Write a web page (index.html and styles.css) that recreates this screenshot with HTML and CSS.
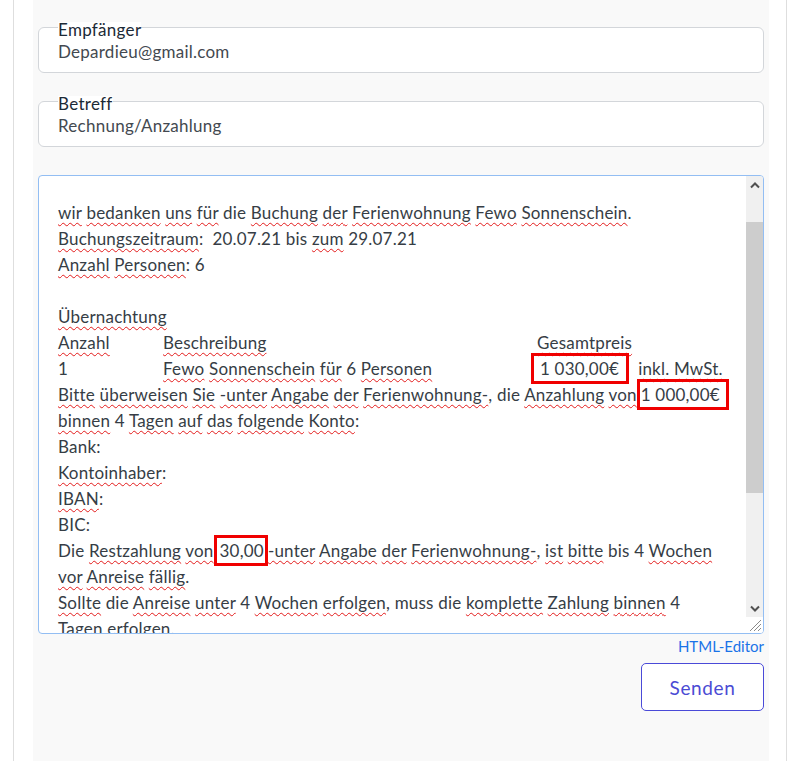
FILE: index.html
```html
<!DOCTYPE html>
<html lang="de">
<head>
    <meta charset="UTF-8">
    <meta name="viewport" content="width=device-width, initial-scale=1.0">
    <title>Rechnung senden</title>
    <link rel="stylesheet" href="styles.css">
</head>
<body>

    <div class="frame">
        <div class="panel">

            <div class="field">
                <span class="field-label">Empfänger</span>
                <div class="field-value">Depardieu@gmail.com</div>
            </div>

            <div class="field">
                <span class="field-label">Betreff</span>
                <div class="field-value">Rechnung/Anzahlung</div>
            </div>

            <div class="editor">
                <div class="editor-text">
                    <div class="line"><u>wir</u> <u>bedanken</u> <u>uns</u> <u>für</u> die <u>Buchung</u> <u>der</u> <u>Ferienwohnung</u> <u>Fewo</u> <u>Sonnenschein</u>.</div>
                    <div class="line"><u>Buchungszeitraum</u>:&nbsp; 20.07.21 bis <u>zum</u> 29.07.21</div>
                    <div class="line"><u>Anzahl</u> <u>Personen</u>: 6</div>
                    <div class="line">&nbsp;</div>
                    <div class="line"><u>Übernachtung</u></div>
                    <div class="line"><span class="col-a"><u>Anzahl</u></span><span class="col-b"><u>Beschreibung</u></span><u>Gesamtpreis</u></div>
                    <div class="line"><span class="col-a">1</span><span class="col-b col-b-short"><u>Fewo</u> <u>Sonnenschein</u> <u>für</u> 6 <u>Personen</u></span><span class="mark mark-total">1 030,00€</span>&nbsp; <u>inkl.</u> <u>MwSt.</u></div>
                    <div class="line"><u>Bitte</u> <u>überweisen</u> <u>Sie</u> <u>-unter</u> <u>Angabe</u> <u>der</u> <u>Ferienwohnung-</u>, die <u>Anzahlung</u> <u>von</u><span class="mark mark-deposit">1 000,00€</span></div>
                    <div class="line"><u>binnen</u> 4 <u>Tagen</u> <u>auf</u> <u>das</u> <u>folgende</u> <u>Konto</u>:</div>
                    <div class="line">Bank:</div>
                    <div class="line"><u>Kontoinhaber</u>:</div>
                    <div class="line"><u>IBAN</u>:</div>
                    <div class="line">BIC:</div>
                    <div class="line">Die <u>Restzahlung</u> <u>von</u><span class="mark mark-rest">30,00</span><u>-unter</u> <u>Angabe</u> <u>der</u> <u>Ferienwohnung-</u>, <u>ist</u> <u>bitte</u> bis 4 <u>Wochen</u></div>
                    <div class="line"><u>vor</u> <u>Anreise</u> <u>fällig</u>.</div>
                    <div class="line"><u>Sollte</u> die <u>Anreise</u> <u>unter</u> 4 <u>Wochen</u> <u>erfolgen</u>, muss die <u>komplette</u> <u>Zahlung</u> <u>binnen</u> 4</div>
                    <div class="line"><u>Tagen</u> <u>erfolgen</u>.</div>
                </div>
                <div class="scrollbar">
                    <div class="sb-button">
                        <svg width="12" height="8" viewBox="0 0 12 8"><polyline points="2,6.5 6,2.5 10,6.5" fill="none" stroke="#505050" stroke-width="2"/></svg>
                    </div>
                    <div class="sb-track"><div class="sb-thumb"></div></div>
                    <div class="sb-button">
                        <svg width="12" height="8" viewBox="0 0 12 8"><polyline points="2,1.5 6,5.5 10,1.5" fill="none" stroke="#505050" stroke-width="2"/></svg>
                    </div>
                    <div class="sb-corner"></div>
                </div>
                <svg class="grip" width="14" height="14" viewBox="0 0 14 14">
                    <line x1="13" y1="2" x2="2" y2="13" stroke="#8a8a8a" stroke-width="1"/>
                    <line x1="13" y1="6" x2="6" y2="13" stroke="#8a8a8a" stroke-width="1"/>
                    <line x1="13" y1="10" x2="10" y2="13" stroke="#8a8a8a" stroke-width="1"/>
                </svg>
            </div>

            <div class="editor-links">
                <a href="#" class="editor-link">HTML-Editor</a>
            </div>

            <div class="actions">
                <button class="send-button">Senden</button>
            </div>

        </div>
    </div>

</body>
</html>
```

FILE: styles.css
```css
body {
    margin: 0;
    background-color: #fff;
    font-family: Lato, "Liberation Sans", Arial, sans-serif;
}
.frame {
    margin-left: 13px;
    width: 736px;
    min-height: 100vh;
    padding: 0 17px 0 19px;
    border-left: 1px solid #dedede;
    border-right: 1px solid #dedede;
    display: flex;
}
.panel {
    flex: 1;
    background-color: #f9f9f9;
    padding: 27px 5px 0 5px;
}
.field {
    background-color: #fff;
    border: 1px solid #d3d6da;
    border-radius: 6px;
    padding: 0 19px 10px 19px;
    margin-bottom: 28px;
}
.field-label {
    display: block;
    width: fit-content;
    margin-top: -6px;
    background-color: #fff;
    color: #1c2a36;
    font-size: 17px;
    letter-spacing: 0.3px;
    line-height: 16px;
}
.field-value {
    margin-top: 4px;
    color: #434950;
    font-size: 17px;
    letter-spacing: 0.25px;
    line-height: 20px;
}
.editor {
    position: relative;
    display: flex;
    height: 457px;
    background-color: #fff;
    border: 1px solid #93bef3;
    border-radius: 4px;
    overflow: hidden;
}
.editor-text {
    flex: 1;
    overflow: hidden;
    padding: 24px 0 0 19px;
    color: #363d45;
    font-size: 17px;
    letter-spacing: 0.2px;
    line-height: 26px;
}
.line {
    white-space: nowrap;
}
.editor-text u {
    text-decoration: underline wavy #e31b1b;
    text-decoration-thickness: 1px;
    text-underline-offset: 3px;
}
.col-a {
    display: inline-block;
    width: 105px;
}
.col-b {
    display: inline-block;
    width: 374px;
}
.col-b-short {
    width: 368px;
}
.mark {
    border: 3px solid #f00000;
    padding: 2px 6px;
}
.mark-total {
    padding: 2px 7px 2px 6px;
}
.mark-deposit {
    padding: 2px 6px 2px 1px;
}
.mark-rest {
    padding: 2px 1px 2px 3px;
}
.scrollbar {
    width: 17px;
    display: flex;
    flex-direction: column;
    background-color: #f0f0f0;
}
.sb-button {
    height: 17px;
    display: flex;
    align-items: center;
    justify-content: center;
}
.sb-track {
    flex: 1;
}
.sb-thumb {
    margin-top: 29px;
    height: 271px;
    background-color: #cdcdcd;
}
.sb-corner {
    height: 16px;
    background-color: #fff;
}
.grip {
    position: absolute;
    right: 1px;
    bottom: 1px;
}
.editor-links {
    text-align: right;
    margin-top: 3px;
    line-height: 18px;
}
.editor-link {
    color: #1a73e8;
    font-size: 15px;
    text-decoration: none;
}
.actions {
    display: flex;
    justify-content: flex-end;
    margin-top: 8px;
}
.send-button {
    width: 123px;
    height: 48px;
    background-color: #fff;
    border: 1px solid #4a4ad8;
    border-radius: 5px;
    color: #4b4bd4;
    font-family: Lato, "Liberation Sans", Arial, sans-serif;
    font-size: 19px;
    letter-spacing: 0.6px;
    cursor: pointer;
}
```
